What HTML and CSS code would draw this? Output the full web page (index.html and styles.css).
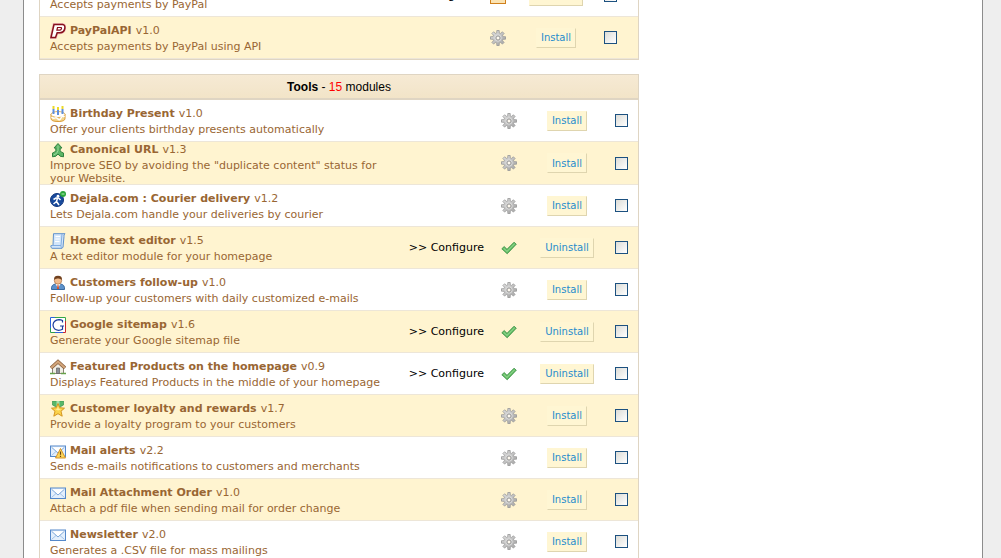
FILE: index.html
```
<!DOCTYPE html>
<html lang="en">
<head>
  <meta charset="UTF-8">
  <meta name="viewport" content="width=device-width, initial-scale=1.0">
  <title>Modules</title>
  <link rel="stylesheet" href="styles.css">
</head>
<body>
  <!-- Shared icons -->
  <svg class="sprite">
    <linearGradient id="silver" x1="0" y1="0" x2="1" y2="1">
      <stop offset="0" stop-color="#e4e4e4"/>
      <stop offset="1" stop-color="#a2a2a2"/>
    </linearGradient>
    <symbol id="gear" viewBox="0 0 16 16">
      <path d="M6.800.5h2.400v2.300l1.500.6 1.700-1.600 1.700 1.700-1.600 1.700.6 1.500h2.400v2.500h-2.400l-.6 1.500 1.600 1.700-1.700 1.700-1.700-1.600-1.500.6v2.400H6.800v-2.400l-1.500-.6-1.700 1.600-1.700-1.700 1.600-1.700-.6-1.500H.5V6.700h2.400l.6-1.500-1.600-1.700 1.700-1.700 1.700 1.600 1.500-.6z" fill="url(#silver)" stroke="#979797" stroke-width=".8" stroke-linejoin="round"/>
      <circle cx="8" cy="8" r="3.200" fill="none" stroke="#dcdcdc"/>
      <circle cx="8" cy="8" r="2" fill="#fffaf0" stroke="#929292" stroke-width=".9"/>
    </symbol>
    <symbol id="tick" viewBox="0 0 16 16">
      <path d="M.8 8.800L3.200 6.500 6 9.300 13 2.200 15.300 4.200 6.200 13.800z" fill="#5cb85e" stroke="#3f9148" stroke-width=".8"/>
      <path d="M2.600 8.300L6 11.500 13.700 3.600" fill="none" stroke="#8ad288" stroke-width="1.200"/>
    </symbol>
    <symbol id="mail" viewBox="0 0 16 16">
      <rect x=".5" y="3" width="15" height="10.500" fill="#e3effc" stroke="#5488ca"/>
      <path d="M1.500 12.500L6 8.500M14.500 12.500L10 8.500" stroke="#a3c3e8"/>
      <path d="M1.500 4.200L8 10l6.500-5.800" fill="#fff" stroke="#7ba6da"/>
    </symbol>
  </svg>

  <div class="page">
    <!-- Payment -->
    <table class="modules payment">
      <colgroup><col><col class="col-configure"><col class="col-status"><col class="col-action"><col class="col-check"></colgroup>
      <tbody>
        <tr>
          <td><h3>PayPal <span>v1.0</span></h3><p>Accepts payments by PayPal</p></td>
          <td class="configure"><a href="#">&gt;&gt; Configure</a></td>
          <td><svg class="icon" viewBox="0 0 16 16"><rect x=".5" y=".5" width="15" height="15" fill="#fbe3b2" stroke="#d0801c"/></svg></td>
          <td><button type="button">Uninstall</button></td>
          <td><input type="checkbox" aria-label="PayPal"></td>
        </tr>
        <tr class="alt">
          <td>
            <h3><svg class="icon" viewBox="0 0 16 16"><path d="M4 1.500h8.500q3 .5 2.300 4-.8 4-4.800 4.300H7.200L5.500 14.500H1z" fill="#fff" stroke="#f0bcbc" stroke-width="2.800"/><path d="M4 1.500h8.500q3 .5 2.300 4-.8 4-4.800 4.300H7.200L5.500 14.500H1z" fill="#fff" stroke="#87101c" stroke-width="1.500"/><path d="M7.500 4.500h3.500q.8.3.4 1.300-.4 1.200-1.500 1.300H6.900z" fill="#fff" stroke="#87101c" stroke-width="1.200"/></svg>PayPalAPI <span>v1.0</span></h3>
            <p>Accepts payments by PayPal using API</p>
          </td>
          <td></td>
          <td><svg class="icon"><use href="#gear"/></svg></td>
          <td><button type="button">Install</button></td>
          <td><input type="checkbox" aria-label="PayPalAPI"></td>
        </tr>
      </tbody>
    </table>

    <!-- Tools -->
    <table class="modules">
      <colgroup><col><col class="col-configure"><col class="col-status"><col class="col-action"><col class="col-check"></colgroup>
      <thead>
        <tr><th colspan="5"><b>Tools</b> - <span class="count">15</span> modules</th></tr>
      </thead>
      <tbody>
        <tr>
          <td>
            <h3><svg class="icon" viewBox="0 0 16 16"><path d="M1 8v4.500q0 3 7 3t7-3V8z" fill="#f3d58c" stroke="#d99a35"/><ellipse cx="8" cy="8.500" rx="7" ry="3" fill="#fff" stroke="#e2b45b"/><path d="M1.500 11q2 2 3.500 1t3 1 3-1 3.500-1" fill="none" stroke="#fff" stroke-width="1.500"/><path d="M3.500 3v5M8 4v5M12.500 3v5" stroke="#5d8fe0" stroke-width="2"/><path d="M3.500 0v3M8 1v3M12.500 0v3" stroke="#ecd928" stroke-width="2"/></svg>Birthday Present <span>v1.0</span></h3>
            <p>Offer your clients birthday presents automatically</p>
          </td>
          <td></td>
          <td><svg class="icon"><use href="#gear"/></svg></td>
          <td><button type="button">Install</button></td>
          <td><input type="checkbox" aria-label="Birthday Present"></td>
        </tr>
        <tr class="alt">
          <td>
            <h3><svg class="icon" viewBox="0 0 16 16"><path d="M8 1.500L12 6H10.200V8.500Q10.700 10.500 13.500 11V14.800Q9.500 15 8 12 6.500 15 2.500 14.800V11q2.800-.5 3.300-2.500V6H4z" fill="#5cb565" stroke="#318140"/><path d="M8 3.500v5Q7.500 12 3.500 13" fill="none" stroke="#98d69a"/></svg>Canonical URL <span>v1.3</span></h3>
            <p>Improve SEO by avoiding the "duplicate content" status for your Website.</p>
          </td>
          <td></td>
          <td><svg class="icon"><use href="#gear"/></svg></td>
          <td><button type="button">Install</button></td>
          <td><input type="checkbox" aria-label="Canonical URL"></td>
        </tr>
        <tr>
          <td>
            <h3><svg class="icon" viewBox="0 0 16 16"><circle cx="7" cy="9" r="6.500" fill="#184a9c" stroke="#10357c"/><circle cx="8" cy="5.200" r="1.400" fill="#fff"/><path d="M3.500 8.500L6 7h2.500L10.500 9M7.500 7L6.500 10.500 9 14M6.500 10.500L3.500 13" fill="none" stroke="#fff" stroke-width="1.500"/><circle cx="13" cy="3" r="3" fill="#2ba53c"/><path d="M11.500 3h3" stroke="#b6efb8"/></svg>Dejala.com : Courier delivery <span>v1.2</span></h3>
            <p>Lets Dejala.com handle your deliveries by courier</p>
          </td>
          <td></td>
          <td><svg class="icon"><use href="#gear"/></svg></td>
          <td><button type="button">Install</button></td>
          <td><input type="checkbox" aria-label="Dejala.com : Courier delivery"></td>
        </tr>
        <tr class="alt">
          <td>
            <h3><svg class="icon" viewBox="0 0 16 16"><path d="M3.500.7H15q-1.500 1-1 3l-.8 8.300q.3 2.500-1.200 3.300H2q-1.800-.8-1-2.800h2z" fill="#d3e6fa" stroke="#5f90cc"/><path d="M12 1L11 12.500H1.500M11 12.500q-.3 2 1 2.700" fill="none" stroke="#82ade0"/><path d="M5.500 3.500h4.500M5.300 6h4.500M5 8.500h4.500" stroke="#fff" stroke-width="1.200"/></svg>Home text editor <span>v1.5</span></h3>
            <p>A text editor module for your homepage</p>
          </td>
          <td class="configure"><a href="#">&gt;&gt; Configure</a></td>
          <td><svg class="icon"><use href="#tick"/></svg></td>
          <td><button type="button">Uninstall</button></td>
          <td><input type="checkbox" aria-label="Home text editor"></td>
        </tr>
        <tr>
          <td>
            <h3><svg class="icon" viewBox="0 0 16 16"><path d="M1.500 14.500q-.5-5 4-5.500h5q4.500.5 4 5.500z" fill="#5c91cb" stroke="#39699f"/><path d="M5.500 9L8 13l2.500-4z" fill="#fff"/><path d="M7.500 10h1l.6 4H6.900z" fill="#d3502c"/><circle cx="8" cy="5.500" r="3.700" fill="#f1bc8d" stroke="#a66a3c" stroke-width=".7"/><path d="M4.200 5Q3.500.8 8 .8T11.800 5Q10.500 3.200 8 3.400 5 3.200 4.200 5z" fill="#70411f"/></svg>Customers follow-up <span>v1.0</span></h3>
            <p>Follow-up your customers with daily customized e-mails</p>
          </td>
          <td></td>
          <td><svg class="icon"><use href="#gear"/></svg></td>
          <td><button type="button">Install</button></td>
          <td><input type="checkbox" aria-label="Customers follow-up"></td>
        </tr>
        <tr class="alt">
          <td>
            <h3><svg class="icon" viewBox="0 0 16 16"><path d="M0 0h16v16H0z" fill="#fff"/><path d="M.5 11V.5H5" fill="none" stroke="#2d62dc"/><path d="M5 .5h10.500V4" fill="none" stroke="#35a647"/><path d="M15.500 4v11.500H13" fill="none" stroke="#c8262c"/><path d="M.5 11v4.500H5" fill="none" stroke="#2f9e4b"/><path d="M5 15.500h8" stroke="#2d62dc"/><path d="M12.500 5.500V3.500Q11 2.600 9 2.600 3.400 3 3 8q.4 5 5.500 5.300 2.300 0 4-1V9M10 9h4" fill="none" stroke="#1c3c9c" stroke-width="1.200"/></svg>Google sitemap <span>v1.6</span></h3>
            <p>Generate your Google sitemap file</p>
          </td>
          <td class="configure"><a href="#">&gt;&gt; Configure</a></td>
          <td><svg class="icon"><use href="#tick"/></svg></td>
          <td><button type="button">Uninstall</button></td>
          <td><input type="checkbox" aria-label="Google sitemap"></td>
        </tr>
        <tr>
          <td>
            <h3><svg class="icon" viewBox="0 0 16 16"><path d="M2.500 8L8 3l5.500 5v6.500h-11z" fill="#f1eee6" stroke="#8c8478"/><path d="M6.500 9h3v5.500h-3z" fill="#8b9097" stroke="#65625e" stroke-width=".7"/><path d="M1 9L8 2.700 15 9" fill="none" stroke="#8c6240" stroke-width="3.600"/><path d="M1.200 8.800L8 2.700l6.800 6.100" fill="none" stroke="#d2a57a" stroke-width="2"/><path d="M0 14.500h5M11 14.500h5" stroke="#67a24b" stroke-width="1.500"/></svg>Featured Products on the homepage <span>v0.9</span></h3>
            <p>Displays Featured Products in the middle of your homepage</p>
          </td>
          <td class="configure"><a href="#">&gt;&gt; Configure</a></td>
          <td><svg class="icon"><use href="#tick"/></svg></td>
          <td><button type="button">Uninstall</button></td>
          <td><input type="checkbox" aria-label="Featured Products on the homepage"></td>
        </tr>
        <tr class="alt">
          <td>
            <h3><svg class="icon" viewBox="0 0 16 16"><path d="M2.500 0h11v4L8 7 2.500 4z" fill="#58b768" stroke="#3b9650" stroke-width=".7"/><path d="M6.500 0h3v5h-3z" fill="#a6dfa8"/><path d="M8 2.500l1.800 4.200 4.700.5-3.500 3 1.200 5L8 12.700l-4.200 2.500 1.200-5-3.500-3 4.700-.5z" fill="#fbd34b" stroke="#d49520"/><path d="M8 5.500l.9 2.400 2.200.3-3 1.400-2.700-1.400 1.700-.3z" fill="#fff0a0"/></svg>Customer loyalty and rewards <span>v1.7</span></h3>
            <p>Provide a loyalty program to your customers</p>
          </td>
          <td></td>
          <td><svg class="icon"><use href="#gear"/></svg></td>
          <td><button type="button">Install</button></td>
          <td><input type="checkbox" aria-label="Customer loyalty and rewards"></td>
        </tr>
        <tr>
          <td>
            <h3><svg class="icon" viewBox="0 0 16 16"><use href="#mail"/><path d="M10.500 5.500l5 9.500h-10z" fill="#fcd65a" stroke="#d69326"/><path d="M10.500 8.500v3.200M10.500 12.700v1.200" stroke="#664315" stroke-width="1.200"/></svg>Mail alerts <span>v2.2</span></h3>
            <p>Sends e-mails notifications to customers and merchants</p>
          </td>
          <td></td>
          <td><svg class="icon"><use href="#gear"/></svg></td>
          <td><button type="button">Install</button></td>
          <td><input type="checkbox" aria-label="Mail alerts"></td>
        </tr>
        <tr class="alt">
          <td>
            <h3><svg class="icon"><use href="#mail"/></svg>Mail Attachment Order <span>v1.0</span></h3>
            <p>Attach a pdf file when sending mail for order change</p>
          </td>
          <td></td>
          <td><svg class="icon"><use href="#gear"/></svg></td>
          <td><button type="button">Install</button></td>
          <td><input type="checkbox" aria-label="Mail Attachment Order"></td>
        </tr>
        <tr>
          <td>
            <h3><svg class="icon"><use href="#mail"/></svg>Newsletter <span>v2.0</span></h3>
            <p>Generates a .CSV file for mass mailings</p>
          </td>
          <td></td>
          <td><svg class="icon"><use href="#gear"/></svg></td>
          <td><button type="button">Install</button></td>
          <td><input type="checkbox" aria-label="Newsletter"></td>
        </tr>
      </tbody>
    </table>
  </div>
</body>
</html>
```
FILE: styles.css
```
* {
  box-sizing: border-box;
}

body {
  margin: 0;
  height: 100vh;
  overflow: hidden;
  background: #eee;
  font-family: Verdana, "DejaVu Sans", sans-serif;
  font-size: 11px;
}

.sprite {
  position: absolute;
  width: 0;
  height: 0;
}

.page {
  margin: -26px 18px 0 23px;
  padding: 0 15px;
  min-height: 120vh;
  background: white;
  border-left: 1px solid #8c8c8c;
  border-right: 1px solid #8c8c8c;
}

.modules {
  width: 100%;
  max-width: 600px;
  margin-bottom: 14px;
  table-layout: fixed;
  border-collapse: separate;
  border-spacing: 0;
  border: 1px solid #dfd5c3;
}

.col-configure {
  width: 95px;
}

.col-status {
  width: 38px;
}

.col-action {
  width: 78px;
}

.col-check {
  width: 32px;
}

.payment .col-check {
  width: 43px;
}

.payment td:last-child {
  padding-right: 12px;
}

th {
  height: 25px;
  padding: 0;
  background: linear-gradient(#f6ead4, #f2e4c8);
  border-bottom: 2px solid #dfd5c3;
  font-family: Arial, "Liberation Sans", sans-serif;
  font-size: 12px;
  font-weight: normal;
  color: black;
}

.count {
  color: red;
}

td {
  height: 42px;
  padding: 0;
  border-bottom: 1px solid #ede6d8;
  text-align: center;
  vertical-align: middle;
}

td:first-child {
  padding-left: 10px;
  text-align: left;
  color: #963;
}

.alt td {
  background: #fff4d0;
}

h3 {
  display: flex;
  align-items: center;
  gap: 4px;
  margin: 0;
  font-size: 11px;
  line-height: 16px;
  white-space: nowrap;
}

h3 span {
  font-weight: normal;
}

p {
  margin: 1px 0 -1px;
  line-height: 13px;
}

.icon {
  display: block;
  flex: none;
  width: 16px;
  height: 16px;
  margin: 0 auto;
}

h3 .icon {
  margin: 0;
}

td.configure {
  padding-right: 6px;
  text-align: right;
}

.configure a {
  color: black;
  text-decoration: none;
}

button {
  height: 20px;
  padding: 0 4px;
  background: #fff6d3;
  border: 1px solid #fff6d3;
  border-right-color: #dfd5af;
  border-bottom-color: #dfd5af;
  font-family: Verdana, "DejaVu Sans", sans-serif;
  font-size: 10px;
  color: #268ccd;
}

input[type="checkbox"] {
  appearance: none;
  display: block;
  width: 13px;
  height: 13px;
  margin: 0 auto;
  background: linear-gradient(135deg, #dcdcd7, #fff);
  border: 1px solid #1c5180;
}
```
